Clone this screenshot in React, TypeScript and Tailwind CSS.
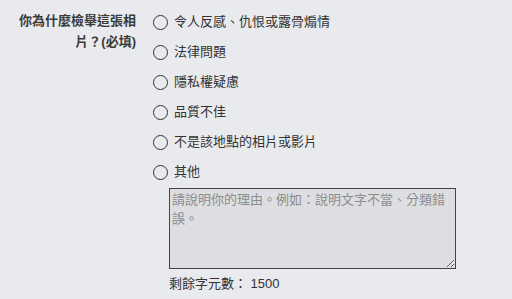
const options = [
  "令人反感、仇恨或露骨煽情",
  "法律問題",
  "隱私權疑慮",
  "品質不佳",
  "不是該地點的相片或影片",
  "其他",
];

export default function App() {
  return (
    <div
      lang="zh-TW"
      className="min-h-screen bg-[#e9eaed] font-['Liberation_Sans','Noto_Sans_CJK_TC',sans-serif] text-[13px] text-[#333]"
    >
      <div className="flex pt-[7px] pl-[17px]">
        {/* question label */}
        <div className="w-[119px] mt-[3px] text-right font-bold leading-[21px] text-[#3a3a3a]">
          你為什麼檢舉這張相片？(必填)
        </div>
        <div className="ml-[17px] flex flex-col">
          {options.map((o) => (
            <label key={o} className="h-[30px] flex items-center gap-[6px]">
              <span className="w-[15px] h-[15px] rounded-full border-[1.5px] border-[#333]" />
              <span>{o}</span>
            </label>
          ))}
          <textarea
            className="ml-[16px] mt-[1px] w-[287px] h-[81px] border border-[#444] bg-[#dddee1] px-[2px] pt-[1px] leading-[19px] text-[13px] placeholder:text-[#8d8d8d] focus:outline-none"
            placeholder="請說明你的理由。例如：說明文字不當、分類錯誤。"
          />
          <div className="ml-[16px] mt-[4px] leading-[21px]">剩餘字元數： 1500</div>
        </div>
      </div>
    </div>
  );
}
